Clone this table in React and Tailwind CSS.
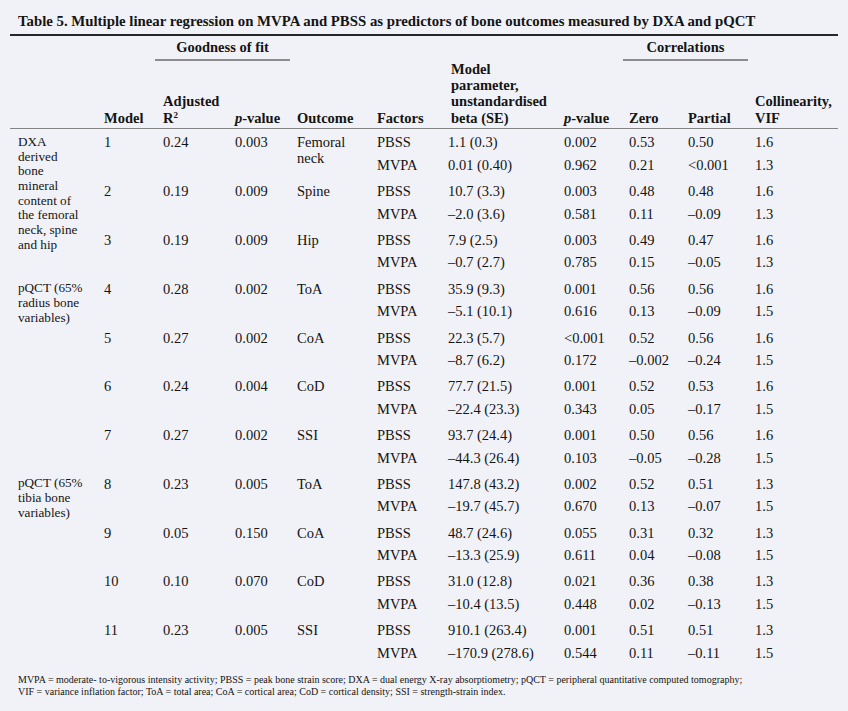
import React from 'react'

const sections = [
	{
		label: ['DXA', 'derived', 'bone', 'mineral', 'content of', 'the femoral', 'neck, spine', 'and hip'],
		models: [
			{n: '1', r2: '0.24', p: '0.003', outcome: ['Femoral', 'neck'], rows: [
				['PBSS', '1.1 (0.3)', '0.002', '0.53', '0.50', '1.6'],
				['MVPA', '0.01 (0.40)', '0.962', '0.21', '<0.001', '1.3'],
			]},
			{n: '2', r2: '0.19', p: '0.009', outcome: ['Spine'], rows: [
				['PBSS', '10.7 (3.3)', '0.003', '0.48', '0.48', '1.6'],
				['MVPA', '–2.0 (3.6)', '0.581', '0.11', '–0.09', '1.3'],
			]},
			{n: '3', r2: '0.19', p: '0.009', outcome: ['Hip'], rows: [
				['PBSS', '7.9 (2.5)', '0.003', '0.49', '0.47', '1.6'],
				['MVPA', '–0.7 (2.7)', '0.785', '0.15', '–0.05', '1.3'],
			]},
		]
	},
	{
		label: ['pQCT (65%', 'radius bone', 'variables)'],
		models: [
			{n: '4', r2: '0.28', p: '0.002', outcome: ['ToA'], rows: [
				['PBSS', '35.9 (9.3)', '0.001', '0.56', '0.56', '1.6'],
				['MVPA', '–5.1 (10.1)', '0.616', '0.13', '–0.09', '1.5'],
			]},
			{n: '5', r2: '0.27', p: '0.002', outcome: ['CoA'], rows: [
				['PBSS', '22.3 (5.7)', '<0.001', '0.52', '0.56', '1.6'],
				['MVPA', '–8.7 (6.2)', '0.172', '–0.002', '–0.24', '1.5'],
			]},
			{n: '6', r2: '0.24', p: '0.004', outcome: ['CoD'], rows: [
				['PBSS', '77.7 (21.5)', '0.001', '0.52', '0.53', '1.6'],
				['MVPA', '–22.4 (23.3)', '0.343', '0.05', '–0.17', '1.5'],
			]},
			{n: '7', r2: '0.27', p: '0.002', outcome: ['SSI'], rows: [
				['PBSS', '93.7 (24.4)', '0.001', '0.50', '0.56', '1.6'],
				['MVPA', '–44.3 (26.4)', '0.103', '–0.05', '–0.28', '1.5'],
			]},
		]
	},
	{
		label: ['pQCT (65%', 'tibia bone', 'variables)'],
		models: [
			{n: '8', r2: '0.23', p: '0.005', outcome: ['ToA'], rows: [
				['PBSS', '147.8 (43.2)', '0.002', '0.52', '0.51', '1.3'],
				['MVPA', '–19.7 (45.7)', '0.670', '0.13', '–0.07', '1.5'],
			]},
			{n: '9', r2: '0.05', p: '0.150', outcome: ['CoA'], rows: [
				['PBSS', '48.7 (24.6)', '0.055', '0.31', '0.32', '1.3'],
				['MVPA', '–13.3 (25.9)', '0.611', '0.04', '–0.08', '1.5'],
			]},
			{n: '10', r2: '0.10', p: '0.070', outcome: ['CoD'], rows: [
				['PBSS', '31.0 (12.8)', '0.021', '0.36', '0.38', '1.3'],
				['MVPA', '–10.4 (13.5)', '0.448', '0.02', '–0.13', '1.5'],
			]},
			{n: '11', r2: '0.23', p: '0.005', outcome: ['SSI'], rows: [
				['PBSS', '910.1 (263.4)', '0.001', '0.51', '0.51', '1.3'],
				['MVPA', '–170.9 (278.6)', '0.544', '0.11', '–0.11', '1.5'],
			]},
		]
	},
]

// columns after the label column: model, R2, p, outcome, factors, beta, p, zero, partial, VIF
const groupCols = 'grid grid-cols-[59px_72px_62px_80px_71px_116px_65px_59px_67px_1fr]'

const Lines = ({lines}) => lines.map((l, i) => <div key={i}>{l}</div>)

const ModelGroup = ({model}) => (
	<div className={`${groupCols} grid-rows-[22.5px_1fr] h-[48.8px] leading-[14px]`}>
		<div className="row-span-2">{model.n}</div>
		<div className="row-span-2">{model.r2}</div>
		<div className="row-span-2">{model.p}</div>
		<div className="row-span-2 leading-[16px] -mt-[1px]"><Lines lines={model.outcome}/></div>
		{model.rows.map((row, i) =>
			row.map((cell, j) => <div key={`${i}-${j}`} className="whitespace-nowrap">{cell}</div>)
		)}
	</div>
)

const Section = ({section}) => (
	<div className="flex">
		<div className="w-[86px] shrink-0 text-[13.2px] leading-[14.7px] -mt-[0.5px]">
			<Lines lines={section.label}/>
		</div>
		<div className="flex-1">
			{section.models.map(m => <ModelGroup key={m.n} model={m}/>)}
		</div>
	</div>
)

export default function App() {
	return (
		<div
			className="min-h-screen w-[848px] bg-[#f1f2f7] text-[#141414] px-[10px] pt-[12px]"
			style={{fontFamily: '"Liberation Serif", "Times New Roman", serif'}}
		>
			<div className="pl-[8px] text-[14.8px] leading-[18px] font-bold whitespace-nowrap">
				Table 5. Multiple linear regression on MVPA and PBSS as predictors of bone outcomes measured by DXA and pQCT
			</div>
			<div className="mt-[4px] h-[2px] bg-[#262626]"></div>

			<div className="pl-[8px] text-[14.5px]">
				{/* spanner headings */}
				<div className="flex font-bold leading-[16px] pt-[2.5px]">
					<div className="ml-[137px] w-[135px] flex flex-col items-center">
						<div>Goodness of fit</div>
						<div className="mt-[4.5px] h-[2px] w-full bg-[#8c8c8c]"></div>
					</div>
					<div className="ml-[333px] w-[125px] flex flex-col items-center">
						<div>Correlations</div>
						<div className="mt-[4.5px] h-[2px] w-full bg-[#8c8c8c]"></div>
					</div>
				</div>

				{/* column headings */}
				<div className="flex items-end font-bold leading-[16.2px]">
					<div className="w-[86px] shrink-0"></div>
					<div className={`${groupCols} flex-1 items-end`}>
						<div>Model</div>
						<div>Adjusted<br/>R<sup className="text-[9px] top-[-5px]">2</sup></div>
						<div><i>p</i>-value</div>
						<div>Outcome</div>
						<div>Factors</div>
						<div className="pl-[3px]">Model<br/>parameter,<br/>unstandardised<br/>beta (SE)</div>
						<div><i>p</i>-value</div>
						<div>Zero</div>
						<div>Partial</div>
						<div>Collinearity,<br/>VIF</div>
					</div>
				</div>
			</div>
			<div className="mt-[2px] h-[1.5px] bg-[#858585]"></div>

			<div className="pl-[8px] pt-[6px] text-[14.5px]">
				{sections.map((s, i) => <Section key={i} section={s}/>)}
			</div>

			<div className="pl-[8px] mt-[2px] text-[10px] leading-[11.5px] whitespace-nowrap">
				<div>MVPA = moderate- to-vigorous intensity activity; PBSS = peak bone strain score; DXA = dual energy X-ray absorptiometry; pQCT = peripheral quantitative computed tomography;</div>
				<div>VIF = variance inflation factor; ToA = total area; CoA = cortical area; CoD = cortical density; SSI = strength-strain index.</div>
			</div>
		</div>
	)
}
